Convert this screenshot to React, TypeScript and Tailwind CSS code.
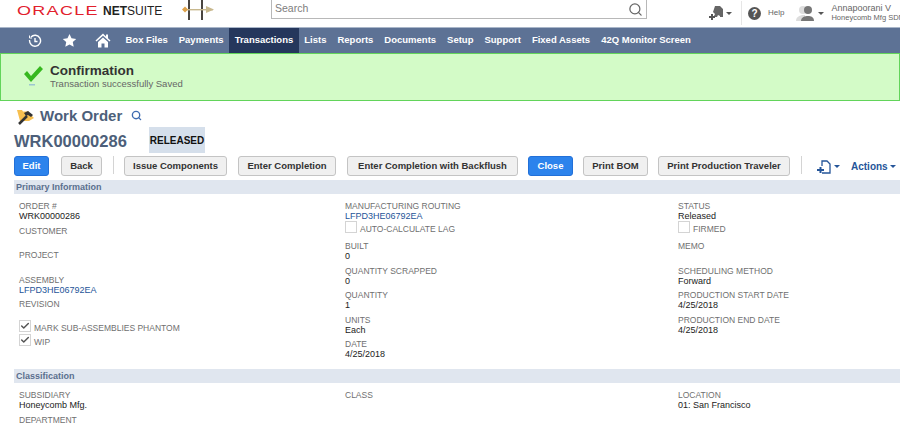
import React from "react";
import { Search, Check } from "lucide-react";

const navItems = ["Box Files", "Payments", "Transactions", "Lists", "Reports", "Documents", "Setup", "Support", "Fixed Assets", "42Q Monitor Screen"];

function Field({ label, value, link }: { label: string; value?: string; link?: boolean }) {
  return (
    <div className="h-[24.5px] leading-[10px]">
      <div className="text-[8.5px] leading-[10px] text-[#6f6f6f]">{label}</div>
      {value && <div className={`text-[9px] leading-[10px] ${link ? "text-[#255599]" : "text-[#222]"}`}>{value}</div>}
    </div>
  );
}

function CheckRow({ label, checked, cls }: { label: string; checked?: boolean; cls: string }) {
  return (
    <div className={`flex items-start ${cls}`}>
      <span className="w-[12px] h-[12px] border border-[#d4d4d4] bg-white flex items-center justify-center shrink-0">
        {checked && <Check size={10} strokeWidth={3.5} className="text-[#555]" />}
      </span>
      <span className="text-[8.5px] leading-[10px] text-[#6f6f6f] ml-[3px] mt-[3px] whitespace-nowrap">{label}</span>
    </div>
  );
}

function Btn({ children, w, primary }: { children: React.ReactNode; w: string; primary?: boolean }) {
  return (
    <button
      className={`h-[20px] ${w} shrink-0 whitespace-nowrap rounded-[3px] text-[9.5px] font-bold leading-none border flex items-center justify-center ${
        primary ? "bg-[#2c83ec] border-[#2270d8] text-white" : "bg-[#f0f0f0] border-[#c4c4c4] text-[#333]"
      }`}
    >
      {children}
    </button>
  );
}

function Section({ title, cls }: { title: string; cls: string }) {
  return (
    <div className={`ml-[14px] h-[14px] bg-[#e0e6ef] pl-[2px] text-[9px] font-bold leading-[14px] text-[#5a6f8e] ${cls}`}>{title}</div>
  );
}

export default function App() {
  return (
    <div className="w-[900px] h-[432px] overflow-hidden bg-white font-['Liberation_Sans',Arial,sans-serif]">
      {/* header */}
      <div className="h-[27px] flex items-start relative">
        <div className="ml-[17px] mt-[1px] w-[254px] shrink-0 flex items-center h-[19px]">
          <span className="text-[#e2202c] text-[13.5px] leading-none tracking-[1px] scale-x-[1.33] origin-left w-[86px] shrink-0">ORACLE</span>
          <span className="text-[12px] font-bold text-[#222] leading-none">NET<span className="font-normal">SUITE</span></span>
          <svg width="34" height="20" viewBox="0 0 34 20" className="ml-[20px] mt-[-1px] shrink-0">
            <rect x="6" y="0" width="2" height="20" fill="#4a4540" />
            <rect x="19" y="0" width="2" height="20" fill="#4a4540" />
            <rect x="1" y="9" width="30" height="1.4" fill="#c8b88e" />
            <path d="M0 9.5 L3 6.5 L6 9.5 L3 12.5Z" fill="#dfa24a" />
            <path d="M24 6 L32 9.5 L24 13Z" fill="#c8b88e" />
          </svg>
        </div>
        <div className="w-[376px] shrink-0 h-[19px] border border-t-0 border-[#b8b8b8] flex items-center justify-between pl-[3px] pr-[3px]">
          <span className="text-[10.5px] text-[#7d7d7d]">Search</span>
          <Search size={15} strokeWidth={2} className="text-[#666]" />
        </div>
        <div className="flex-1 flex items-center h-[26px] pl-[61px]">
          <svg width="16" height="14" viewBox="0 0 16 14" className="shrink-0">
            <path d="M7 0h5l3 3v8h-3v-1l-2-1-1 2H5.5L7 8 5 6z" fill="#666" />
            <path d="M3 8h2v2h2v2H5v2H3v-2H1v-2h2z" fill="#555" />
          </svg>
          <span className="ml-[2px] w-0 h-0 border-x-[3px] border-x-transparent border-t-[3px] border-t-[#555]" />
          <span className="ml-[9px] h-[24px] w-px bg-[#e6e6e6]" />
          <span className="ml-[6px] w-[13px] h-[13px] rounded-full bg-[#555] text-white text-[10px] font-bold leading-[13px] text-center shrink-0">?</span>
          <span className="ml-[7px] text-[8px] text-[#666]">Help</span>
          <svg width="19" height="17" viewBox="0 0 19 17" className="ml-[12px] shrink-0">
            <circle cx="7" cy="5" r="4" fill="#ddd" />
            <path d="M0 16c0-4 3-5 6-6h3v6z" fill="#ddd" />
            <circle cx="12" cy="5" r="4" fill="#777" />
            <path d="M5 16c0-4 4-5 7-5s6 1 6 5z" fill="#777" />
          </svg>
          <span className="ml-[3px] w-0 h-0 border-x-[3px] border-x-transparent border-t-[3px] border-t-[#555]" />
          <div className="ml-[7px] whitespace-nowrap -mt-[1px]">
            <div className="text-[9px] leading-[10px] text-[#666]">Annapoorani V</div>
            <div className="text-[7.5px] leading-[9px] text-[#666]">Honeycomb Mfg SDN</div>
          </div>
        </div>
      </div>

      {/* nav */}
      <div className="h-[26px] bg-[#5d7295] border-t border-[#a9b6c9] flex items-center text-white text-[9.5px] font-bold">
        <div className="flex items-center h-full pl-[28px]">
          <svg width="14" height="14" viewBox="0 0 14 14" fill="none" stroke="#fff" strokeWidth="1.4">
            <path d="M3 3a5.5 5.5 0 1 1-1.4 3" />
            <path d="M1.5 1.5v2.5h2.5" strokeWidth="1" />
            <path d="M7 4v3.5h2.5" />
          </svg>
          <svg width="15" height="15" viewBox="0 0 15 15" fill="#fff" className="ml-[20px]">
            <path d="M7.5 1l2 4.3 4.7.6-3.4 3.2.9 4.6-4.2-2.3-4.2 2.3.9-4.6L.8 5.9l4.7-.6z" />
          </svg>
          <svg width="16" height="15" viewBox="0 0 16 15" fill="#fff" className="ml-[18px]">
            <path d="M8 0.5 L0.5 7.5 L1.5 8.5 L8 2.8 L14.5 8.5 L15.5 7.5 L13 5.2 V1.5 H11 V3.4Z" />
            <path d="M3 9 L8 4.5 L13 9 V14.5 H9.5 V10.5 H6.5 V14.5 H3Z" />
          </svg>
        </div>
        <div className="flex items-center h-full ml-[9px]">
          {navItems.map((n) => (
            <div
              key={n}
              className={`h-full flex items-center whitespace-nowrap px-[5.5px] ${n === "Transactions" ? "bg-[#25375c]" : ""}`}
            >
              {n}
            </div>
          ))}
        </div>
      </div>

      {/* confirmation */}
      <div className="h-[48px] bg-[#d3fbc7] border border-[#62d45a] flex items-start">
        <svg width="21" height="22" viewBox="0 0 21 22" className="ml-[22px] mt-[11px]">
          <path d="M1 9 L4 6 L8 11 L17 1 L20 4 L8 17Z" fill="#36b81f" />
          <rect x="6" y="19" width="6" height="1.5" fill="#9cc6d0" />
        </svg>
        <div className="ml-[6px] mt-[9px]">
          <div className="text-[13.5px] leading-[15px] font-bold text-[#333]">Confirmation</div>
          <div className="text-[9.5px] leading-[12px] text-[#666]">Transaction successfully Saved</div>
        </div>
      </div>

      {/* title */}
      <div className="h-[26px] flex items-center pl-[17px] pt-[3px]">
        <svg width="18" height="18" viewBox="0 0 18 18">
          <path d="M0 3h5l1 1.5h6V6l5 5-5 3H3z" fill="#f7bf4f" />
          <path d="M2 17l8-8" stroke="#333" strokeWidth="2.5" />
          <path d="M7 6l4-2 5 4-2 2-3-2-2 1z" fill="#333" />
        </svg>
        <span className="ml-[5px] text-[15px] font-bold text-[#4d5f7a] leading-none">Work Order</span>
        <Search size={11} strokeWidth={3} className="ml-[9px] text-[#3f6cb0]" />
      </div>
      <div className="h-[27px] flex items-start pl-[14px]">
        <span className="text-[16.5px] font-bold text-[#4d5f7a] leading-[29px] w-[135px] shrink-0">WRK00000286</span>
        <span className="h-[26px] w-[56px] bg-[#d5dfeb] text-[10px] font-bold text-[#111] flex items-center justify-center">RELEASED</span>
      </div>

      {/* buttons */}
      <div className="h-[26px] flex items-start pl-[14px] pt-[2px]">
        <Btn w="w-[35px]" primary>Edit</Btn>
        <div className="ml-[12px]"><Btn w="w-[41px]">Back</Btn></div>
        <span className="ml-[11px] h-[18px] w-px bg-[#d4d4d4]" />
        <div className="ml-[10px]"><Btn w="w-[103px]">Issue Components</Btn></div>
        <div className="ml-[11px]"><Btn w="w-[98px]">Enter Completion</Btn></div>
        <div className="ml-[11px]"><Btn w="w-[171px]">Enter Completion with Backflush</Btn></div>
        <div className="ml-[10px]"><Btn w="w-[45px]" primary>Close</Btn></div>
        <div className="ml-[10px]"><Btn w="w-[65px]">Print BOM</Btn></div>
        <div className="ml-[10px]"><Btn w="w-[132px]">Print Production Traveler</Btn></div>
        <span className="ml-[11px] h-[18px] w-px bg-[#d4d4d4]" />
        <svg width="16" height="14" viewBox="0 0 16 14" fill="none" stroke="#255599" strokeWidth="1.3" className="ml-[14px] mt-[4px] shrink-0">
          <path d="M6 6V1h5l3 3v9H6" />
          <path d="M4.5 7v6M1 10h7" strokeWidth="2" />
        </svg>
        <span className="ml-[2px] mt-[9px] w-0 h-0 border-x-[3px] border-x-transparent border-t-[3px] border-t-[#255599]" />
        <span className="ml-[11px] mt-[4px] text-[10px] font-bold text-[#255599] leading-[13px]">Actions</span>
        <span className="ml-[2px] mt-[9px] w-0 h-0 border-x-[3px] border-x-transparent border-t-[3px] border-t-[#255599]" />
      </div>

      <Section title="Primary Information" cls="" />

      <div className="flex h-[175px] pt-[7px]">
        <div className="ml-[19px] w-[326px]">
          <Field label="ORDER #" value="WRK00000286" />
          <Field label="CUSTOMER" />
          <Field label="PROJECT" />
          <Field label="ASSEMBLY" value="LFPD3HE06792EA" link />
          <Field label="REVISION" />
          <CheckRow label="MARK SUB-ASSEMBLIES PHANTOM" checked cls="h-[14px] mt-[-4px]" />
          <CheckRow label="WIP" checked cls="h-[14px]" />
        </div>
        <div className="w-[333px]">
          <Field label="MANUFACTURING ROUTING" value="LFPD3HE06792EA" link />
          <CheckRow label="AUTO-CALCULATE LAG" cls="h-[20.5px] -mt-[5px]" />
          <Field label="BUILT" value="0" />
          <Field label="QUANTITY SCRAPPED" value="0" />
          <Field label="QUANTITY" value="1" />
          <Field label="UNITS" value="Each" />
          <Field label="DATE" value="4/25/2018" />
        </div>
        <div className="flex-1">
          <Field label="STATUS" value="Released" />
          <CheckRow label="FIRMED" cls="h-[20.5px] -mt-[5px]" />
          <Field label="MEMO" />
          <Field label="SCHEDULING METHOD" value="Forward" />
          <Field label="PRODUCTION START DATE" value="4/25/2018" />
          <Field label="PRODUCTION END DATE" value="4/25/2018" />
        </div>
      </div>

      <Section title="Classification" cls="" />

      <div className="flex pt-[7px]">
        <div className="ml-[19px] w-[326px]">
          <Field label="SUBSIDIARY" value="Honeycomb Mfg." />
          <Field label="DEPARTMENT" />
        </div>
        <div className="w-[333px]">
          <Field label="CLASS" />
        </div>
        <div className="flex-1">
          <Field label="LOCATION" value="01: San Francisco" />
        </div>
      </div>
    </div>
  );
}
